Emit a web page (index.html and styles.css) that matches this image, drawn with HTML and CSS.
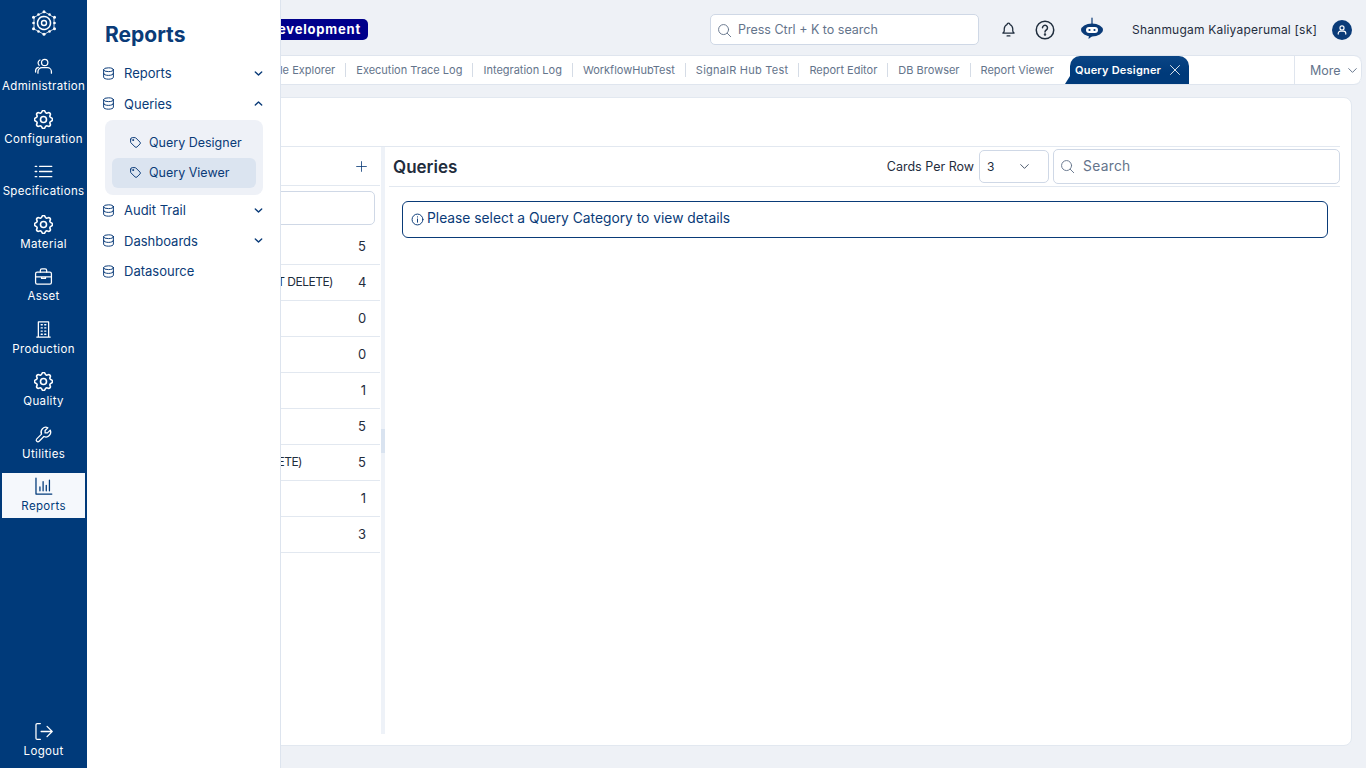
FILE: index.html
```html
<!DOCTYPE html>
<html lang="en">
<head>
  <meta charset="UTF-8">
  <meta name="viewport" content="width=device-width, initial-scale=1.0">
  <title>Query Designer</title>
  <link rel="stylesheet" href="styles.css">
</head>
<body>

  <!-- shared icons -->
  <svg class="icon-defs" aria-hidden="true">
    <symbol id="i-gear" viewBox="2.5 2.5 19 19">
      <path d="M10.325 4.317c.426-1.756 2.924-1.756 3.35 0a1.724 1.724 0 0 0 2.573 1.066c1.543-.94 3.31.826 2.37 2.37a1.724 1.724 0 0 0 1.065 2.572c1.756.426 1.756 2.924 0 3.35a1.724 1.724 0 0 0-1.066 2.573c.94 1.543-.826 3.31-2.37 2.37a1.724 1.724 0 0 0-2.572 1.065c-.426 1.756-2.924 1.756-3.35 0a1.724 1.724 0 0 0-2.573-1.066c-1.543.94-3.31-.826-2.37-2.37a1.724 1.724 0 0 0-1.065-2.572c-1.756-.426-1.756-2.924 0-3.35a1.724 1.724 0 0 0 1.066-2.573c-.94-1.543.826-3.31 2.37-2.37 1 .608 2.296.07 2.572-1.065z"/>
      <circle cx="12" cy="12" r="3"/>
    </symbol>
    <symbol id="i-db" viewBox="0 0 24 24">
      <ellipse cx="12" cy="5" rx="9" ry="3.500"/>
      <path d="M3 5v14c0 1.900 4 3.500 9 3.500s9-1.600 9-3.500V5"/>
      <path d="M3 12c0 1.900 4 3.500 9 3.500s9-1.600 9-3.500"/>
    </symbol>
    <symbol id="i-tag" viewBox="0 0 24 24">
      <circle cx="7.500" cy="7.500" r="1"/>
      <path d="M3 6v5.172a2 2 0 0 0 .586 1.414l7.71 7.71a2.41 2.41 0 0 0 3.408 0l5.592-5.592a2.41 2.41 0 0 0 0-3.408l-7.71-7.71a2 2 0 0 0-1.414-.586h-5.172a3 3 0 0 0-3 3z"/>
    </symbol>
    <symbol id="i-search" viewBox="0 0 24 24">
      <circle cx="10.500" cy="10.500" r="8"/>
      <path d="M16.500 16.500 22 22"/>
    </symbol>
    <symbol id="i-down" viewBox="0 0 24 24">
      <path d="M5 8.500l7 7 7-7"/>
    </symbol>
  </svg>

  <nav class="rail">
    <div class="rail-logo">
      <svg class="logo" viewBox="0 0 26 26">
        <path class="logo-links" d="M13 2 8 4.500 3 7.500v5.500l0 6 5 2.500 5 3 5-3 5-2.500v-6l0-5.500-5-3z"/>
        <g class="logo-dots">
          <circle cx="13" cy="1.800" r="1.500"/>
          <circle cx="18.500" cy="4.500" r="1.300"/>
          <circle cx="23.500" cy="7.200" r="1.500"/>
          <circle cx="23.500" cy="13" r="1.300"/>
          <circle cx="23.500" cy="18.800" r="1.500"/>
          <circle cx="18.500" cy="21.500" r="1.300"/>
          <circle cx="13" cy="24.200" r="1.500"/>
          <circle cx="7.500" cy="21.500" r="1.300"/>
          <circle cx="2.500" cy="18.800" r="1.500"/>
          <circle cx="2.500" cy="13" r="1.300"/>
          <circle cx="2.500" cy="7.200" r="1.500"/>
          <circle cx="7.500" cy="4.500" r="1.300"/>
        </g>
        <circle class="logo-ring" cx="13" cy="13" r="6.500"/>
        <circle class="logo-core" cx="13" cy="13" r="2.500"/>
      </svg>
    </div>
    <a class="rail-item">
      <svg class="rail-icon" viewBox="0 0 24 24"><circle cx="13.500" cy="7" r="4"/><path d="M5 20.500v-2a5 5 0 0 1 5-5h7a5 5 0 0 1 5 5v2"/><path d="M7.500 3.800a4 4 0 0 0-1 6.600"/><path d="M5.500 13A4.500 4.500 0 0 0 2 17.500v1.500"/></svg>
      <span>Administration</span>
    </a>
    <a class="rail-item">
      <svg class="rail-icon"><use href="#i-gear"/></svg>
      <span>Configuration</span>
    </a>
    <a class="rail-item">
      <svg class="rail-icon" viewBox="0 0 24 24"><path d="M7 5.500h15.500M7 12h15.500M7 18.500h15.500M1.500 5.500h2M1.500 12h2M1.500 18.500h2"/></svg>
      <span>Specifications</span>
    </a>
    <a class="rail-item">
      <svg class="rail-icon"><use href="#i-gear"/></svg>
      <span>Material</span>
    </a>
    <a class="rail-item">
      <svg class="rail-icon" viewBox="0 0 24 24"><rect x="2" y="6.500" width="20" height="15" rx="2"/><path d="M8 6.500V4.500a2 2 0 0 1 2-2h4a2 2 0 0 1 2 2v2M2 12.500h20M9.500 12.500v2h5v-2"/></svg>
      <span>Asset</span>
    </a>
    <a class="rail-item">
      <svg class="rail-icon" viewBox="0 0 24 24"><path d="M5.500 21.500v-19h13v19M3.500 21.500h17M9 6h1.500M13.500 6H15M9 10h1.500M13.500 10H15M9 14h1.500M13.500 14H15M9 18h1.500M13.500 18H15"/></svg>
      <span>Production</span>
    </a>
    <a class="rail-item">
      <svg class="rail-icon"><use href="#i-gear"/></svg>
      <span>Quality</span>
    </a>
    <a class="rail-item">
      <svg class="rail-icon" viewBox="0 0 24 24"><path d="M7 10h3v-3l-3.500-3.500a6 6 0 0 1 8 8l6 6a2 2 0 0 1-3 3l-6-6a6 6 0 0 1-8-8z" transform="matrix(-1 0 0 1 24 0)"/></svg>
      <span>Utilities</span>
    </a>
    <a class="rail-item active">
      <svg class="rail-icon" viewBox="0 0 24 24"><path d="M2.500 1.500v20h20M7.500 17.500v-5M11.500 17.500V6M15.500 17.500v-7M19.500 17.500V4"/></svg>
      <span>Reports</span>
    </a>
    <a class="rail-item logout">
      <svg class="rail-icon" viewBox="0 0 24 24"><path d="M8 2H4a1.500 1.500 0 0 0-1.500 1.500v17A1.500 1.500 0 0 0 4 22h4M9 12h14M16.500 5.500 23 12l-6.500 6.500"/></svg>
      <span>Logout</span>
    </a>
  </nav>

  <aside class="flyout">
    <h2 class="flyout-title">Reports</h2>
    <a class="menu-item">
      <svg class="menu-icon"><use href="#i-db"/></svg>
      <span>Reports</span>
      <svg class="menu-arrow"><use href="#i-down"/></svg>
    </a>
    <a class="menu-item">
      <svg class="menu-icon"><use href="#i-db"/></svg>
      <span>Queries</span>
      <svg class="menu-arrow open"><use href="#i-down"/></svg>
    </a>
    <div class="submenu">
      <a class="submenu-item">
        <svg class="menu-icon"><use href="#i-tag"/></svg>
        <span>Query Designer</span>
      </a>
      <a class="submenu-item active">
        <svg class="menu-icon"><use href="#i-tag"/></svg>
        <span>Query Viewer</span>
      </a>
    </div>
    <a class="menu-item">
      <svg class="menu-icon"><use href="#i-db"/></svg>
      <span>Audit Trail</span>
      <svg class="menu-arrow"><use href="#i-down"/></svg>
    </a>
    <a class="menu-item">
      <svg class="menu-icon"><use href="#i-db"/></svg>
      <span>Dashboards</span>
      <svg class="menu-arrow"><use href="#i-down"/></svg>
    </a>
    <a class="menu-item">
      <svg class="menu-icon"><use href="#i-db"/></svg>
      <span>Datasource</span>
    </a>
  </aside>

  <div class="main">
    <header class="topbar">
      <span class="env-badge">Development</span>
      <div class="global-search">
        <svg class="search-icon"><use href="#i-search"/></svg>
        <span>Press Ctrl + K to search</span>
      </div>
      <svg class="top-icon bell" viewBox="0 0 24 24"><path d="M10 5a2 2 0 1 1 4 0 7 7 0 0 1 4 6v3a4 4 0 0 0 2 3H4a4 4 0 0 0 2-3v-3a7 7 0 0 1 4-6"/><path d="M10 21h4"/></svg>
      <svg class="top-icon help" viewBox="0 0 24 24"><circle cx="12" cy="12" r="10.500"/><path d="M9 9.300a3 3 0 1 1 4.500 2.700c-1 .6-1.500 1.200-1.500 2.400"/><circle cx="12" cy="17.500" r=".6"/></svg>
      <svg class="bot" viewBox="0 0 22 24"><path class="bot-stem" d="M11 1v6"/><ellipse cx="11" cy="13" rx="11" ry="6.500"/><path d="M8 18l-.5 4 4.500-3.500z"/><rect class="bot-face" x="5" y="10" width="12" height="6" rx="3"/><circle cx="8.500" cy="13" r="1.100"/><circle cx="13.500" cy="13" r="1.100"/></svg>
      <span class="user-name">Shanmugam Kaliyaperumal [sk]</span>
      <span class="avatar">
        <svg viewBox="0 0 24 24"><circle cx="12" cy="8.500" r="3.500"/><path d="M5.500 19v-1a4 4 0 0 1 4-4h5a4 4 0 0 1 4 4v1"/></svg>
      </span>
    </header>

    <div class="tabstrip">
      <div class="tabs">
        <a class="tab">Module Explorer</a>
        <a class="tab">Execution Trace Log</a>
        <a class="tab">Integration Log</a>
        <a class="tab">WorkflowHubTest</a>
        <a class="tab wide">SignalR Hub Test</a>
        <a class="tab">Report Editor</a>
        <a class="tab">DB Browser</a>
        <a class="tab last">Report Viewer</a>
        <a class="tab-active">
          <span>Query Designer</span>
          <svg viewBox="0 0 24 24"><path d="M3 3l18 18M21 3 3 21"/></svg>
        </a>
      </div>
      <div class="tab-more">
        <span>More</span>
        <svg><use href="#i-down"/></svg>
      </div>
    </div>

    <section class="card">
      <div class="card-head"></div>
      <div class="card-body">
        <div class="cat-panel">
          <div class="cat-head">
            <svg class="cat-add" viewBox="0 0 24 24"><path d="M12 3v18M3 12h18"/></svg>
          </div>
          <div class="cat-search"></div>
          <div class="cat-row"><span class="cat-name"></span><span class="cat-num">5</span></div>
          <div class="cat-row name-end-a"><span class="cat-name">T DELETE)</span><span class="cat-num">4</span></div>
          <div class="cat-row"><span class="cat-name"></span><span class="cat-num">0</span></div>
          <div class="cat-row"><span class="cat-name"></span><span class="cat-num">0</span></div>
          <div class="cat-row"><span class="cat-name"></span><span class="cat-num">1</span></div>
          <div class="cat-row"><span class="cat-name"></span><span class="cat-num">5</span></div>
          <div class="cat-row name-end-b"><span class="cat-name">ETE)</span><span class="cat-num">5</span></div>
          <div class="cat-row"><span class="cat-name"></span><span class="cat-num">1</span></div>
          <div class="cat-row"><span class="cat-name"></span><span class="cat-num">3</span></div>
        </div>

        <div class="splitter"><span class="splitter-handle"></span></div>

        <div class="query-panel">
          <div class="query-head">
            <h3 class="query-title">Queries</h3>
            <label class="cards-label">Cards Per Row</label>
            <div class="cards-select">
              <span>3</span>
              <svg><use href="#i-down"/></svg>
            </div>
            <div class="query-search">
              <svg class="search-icon"><use href="#i-search"/></svg>
              <span>Search</span>
            </div>
          </div>
          <div class="alert">
            <svg class="alert-icon" viewBox="0 0 24 24"><circle cx="12" cy="12" r="10"/><path d="M12 11v6"/><path d="M12 7v.5"/></svg>
            <span>Please select a Query Category to view details</span>
          </div>
        </div>
      </div>
    </section>
  </div>

</body>
</html>
```

FILE: styles.css
```css
* {
  box-sizing: border-box;
}

html, body {
  height: 100%;
}

body {
  margin: 0;
  overflow: hidden;
  display: flex;
  background: #eef1f6;
  color: #1f2d3d;
  font-family: Inter, "Noto Sans", sans-serif;
}

svg {
  fill: none;
  stroke: currentColor;
  stroke-linecap: round;
  stroke-linejoin: round;
}

.icon-defs {
  display: none;
}

/* left rail */
.rail {
  flex: 0 0 87px;
  height: 768px;
  padding: 0 2px 5px;
  display: flex;
  flex-direction: column;
  background: #003a7a;
  color: #fff;
}

.rail-logo {
  height: 53px;
  padding-top: 10px;
  display: flex;
  justify-content: center;
}

.logo {
  width: 26px;
  height: 26px;
}

.logo-links {
  stroke-width: 0.8;
}

.logo-dots {
  fill: #fff;
  stroke: none;
}

.logo-ring {
  stroke-width: 1.6;
  stroke-dasharray: 3 1.1;
}

.logo-core {
  stroke-width: 1.4;
}

.rail-item {
  height: 45px;
  margin-bottom: 7.5px;
  padding-bottom: 1px;
  display: flex;
  flex-direction: column;
  align-items: center;
  justify-content: center;
  gap: 3px;
  font-size: 11.5px;
  letter-spacing: 0.35px;
  white-space: nowrap;
}

.rail-item.active {
  background: #f5f8fc;
  color: #003a7a;
}

.rail-item.logout {
  margin-top: auto;
  margin-bottom: 0;
}

.rail-icon {
  width: 19px;
  height: 19px;
  stroke-width: 1.6;
}

/* flyout menu, open over the page */
.flyout {
  position: absolute;
  top: 0;
  left: 87px;
  z-index: 5;
  width: 194px;
  height: 768px;
  padding: 0 17px 0 18px;
  background: #fff;
  border-right: 1px solid #dde4ee;
  color: #0a3b78;
}

.flyout-title {
  margin: 0;
  padding-top: 21px;
  height: 58px;
  font-size: 21px;
  line-height: 28px;
  font-weight: 700;
}

.menu-item {
  height: 30.5px;
  margin-left: -3px;
  display: flex;
  align-items: center;
  font-size: 13px;
}

.menu-icon {
  flex: none;
  width: 13px;
  height: 13px;
  margin-right: 9px;
  stroke-width: 1.8;
}

.menu-arrow {
  margin-left: auto;
  margin-right: -1px;
  width: 11px;
  height: 11px;
  stroke-width: 3;
}

.menu-arrow.open {
  transform: rotate(180deg);
}

.submenu {
  height: 75px;
  margin: 0.5px 0;
  padding: 8px 7px 7px;
  display: flex;
  flex-direction: column;
  background: #eef1f7;
  border-radius: 8px;
}

.submenu-item {
  height: 30px;
  padding-left: 17px;
  display: flex;
  align-items: center;
  border-radius: 6px;
  font-size: 12.5px;
}

.submenu-item .menu-icon {
  margin-right: 7px;
}

.submenu-item.active {
  background: #dbe4f0;
}

/* page */
.main {
  flex: 1;
  min-width: 0;
  display: flex;
  flex-direction: column;
}

.topbar {
  height: 55px;
  flex: none;
  padding: 4px 14px 0 0;
  display: flex;
  align-items: center;
  justify-content: flex-end;
}

.env-badge {
  margin-right: 342px;
  padding: 0 7px;
  height: 21px;
  line-height: 21px;
  border-radius: 5px;
  background: #00008b;
  color: #fff;
  font-size: 13px;
  font-weight: 700;
  letter-spacing: 0.8px;
}

.global-search {
  width: 269px;
  height: 31px;
  padding-left: 6px;
  display: flex;
  align-items: center;
  gap: 6px;
  background: #fff;
  border: 1px solid #cfd8e6;
  border-radius: 5px;
  color: #64748b;
  font-size: 12.5px;
}

.search-icon {
  flex: none;
  width: 15px;
  height: 15px;
  margin-top: 2px;
  stroke-width: 1.5;
  color: #64748b;
}

.top-icon {
  flex: none;
  color: #1f2d3d;
}

.bell {
  width: 17px;
  height: 17px;
  margin-left: 21px;
  stroke-width: 1.8;
}

.help {
  width: 20px;
  height: 20px;
  margin-left: 18px;
  stroke-width: 1.8;
}

.bot {
  flex: none;
  width: 22px;
  height: 24px;
  margin-left: 26px;
  margin-top: -1px;
  fill: #0a3b78;
  stroke: none;
  color: #0a3b78;
}

.bot-stem {
  stroke: #0a3b78;
  stroke-width: 1.2;
}

.bot-face {
  fill: #fff;
}

.user-name {
  margin-left: 29px;
  font-size: 12px;
  letter-spacing: 0.2px;
  white-space: nowrap;
}

.avatar {
  flex: none;
  width: 20px;
  height: 20px;
  margin-left: 15px;
  padding: 3px;
  border-radius: 50%;
  background: #0a3b78;
  color: #fff;
}

.avatar svg {
  display: block;
  stroke-width: 2;
}

.tabstrip {
  flex: none;
  height: 30px;
  margin-right: 4px;
  display: flex;
  background: #fff;
  border: 1px solid #dfe5ee;
  border-width: 1px 0;
  border-radius: 0 8px 8px 0;
}

.tabs {
  flex: 1;
  min-width: 0;
  padding: 0 105px 0 5px;
  display: flex;
  justify-content: flex-end;
  align-items: center;
  overflow: hidden;
}

.tab {
  flex: none;
  height: 14px;
  padding: 0 10px;
  border-right: 1px solid #d5dce6;
  color: #64748b;
  font-size: 11px;
  line-height: 14px;
  white-space: nowrap;
}

.tab.wide {
  letter-spacing: 0.25px;
}

.tab.last {
  border-right: 0;
  padding-right: 16px;
}

.tab-active {
  position: relative;
  flex: none;
  width: 119px;
  height: 28px;
  padding: 0 8px 0 5px;
  display: flex;
  align-items: center;
  justify-content: space-between;
  background: linear-gradient(#0a4585, #003a7a 60%);
  color: #fff;
  border-radius: 10px 10px 0 0;
  font-size: 11px;
  font-weight: 600;
  letter-spacing: 0.2px;
  white-space: nowrap;
}

.tab-active::before {
  content: "";
  position: absolute;
  left: -5px;
  bottom: 0;
  border-style: solid;
  border-width: 0 0 8px 5px;
  border-color: transparent transparent #003a7a transparent;
}

.tab-active svg {
  width: 12px;
  height: 12px;
  stroke-width: 1.7;
}

.tab-more {
  flex: none;
  width: 68px;
  padding-left: 15px;
  display: flex;
  align-items: center;
  gap: 5px;
  border: 1px solid #dfe5ee;
  border-width: 0 1px 0 1px;
  border-radius: 0 8px 8px 0;
  color: #64748b;
  font-size: 12.5px;
}

.tab-more svg {
  width: 13px;
  height: 13px;
  stroke-width: 1.8;
}

.card {
  flex: none;
  height: 649px;
  margin: 12px 14px 0 10px;
  padding: 0 11px 11px 0;
  display: flex;
  flex-direction: column;
  background: #fff;
  border: 1px solid #e2e8f0;
  border-radius: 8px;
}

.card-head {
  flex: none;
  height: 49px;
  border-bottom: 1px solid #e2e8f0;
}

.card-body {
  flex: 1;
  min-height: 0;
  display: flex;
}

.cat-panel {
  flex: 1;
  min-width: 0;
}

.cat-head {
  height: 39px;
  padding-right: 12px;
  display: flex;
  align-items: center;
  justify-content: flex-end;
  border-bottom: 1px solid #e2e8f0;
}

.cat-add {
  width: 13px;
  height: 13px;
  stroke-width: 1.5;
  color: #0a3b78;
}

.cat-search {
  height: 34px;
  margin: 5px 5px 4px 10px;
  border: 1px solid #cfd8e6;
  border-radius: 5px;
}

.cat-row {
  height: 36px;
  padding: 0 14px 2px 10px;
  display: flex;
  align-items: center;
  border-bottom: 1px solid #e2e8f0;
  font-size: 13px;
  white-space: nowrap;
}

.cat-name {
  flex: 1;
  min-width: 0;
  font-size: 12px;
  letter-spacing: -0.5px;
  text-align: right;
}

.name-end-a .cat-name {
  padding-right: 25px;
}

.name-end-b .cat-name {
  padding-right: 56px;
}

.cat-num {
  width: 8px;
  text-align: right;
}

.splitter {
  flex: none;
  width: 4px;
  margin-left: 1px;
  display: flex;
  align-items: center;
  background: #eef2f8;
}

.splitter-handle {
  width: 4px;
  height: 24px;
  background: #d9e3f0;
}

.query-panel {
  flex: none;
  width: 955px;
  padding-left: 4px;
}

.query-head {
  height: 40px;
  padding-left: 4px;
  display: flex;
  align-items: center;
  border-bottom: 1px solid #e2e8f0;
}

.query-title {
  flex: 1;
  margin: 0;
  font-size: 17px;
  font-weight: 600;
}

.cards-label {
  margin-right: 5px;
  font-size: 12.5px;
  white-space: nowrap;
}

.cards-select {
  width: 70px;
  height: 33px;
  margin-right: 4px;
  padding: 0 17px 0 7px;
  display: flex;
  align-items: center;
  justify-content: space-between;
  border: 1px solid #cfd8e6;
  border-radius: 5px;
  font-size: 12px;
}

.cards-select svg {
  width: 13px;
  height: 13px;
  stroke-width: 1.8;
  color: #475569;
}

.query-search {
  width: 287px;
  height: 35px;
  padding: 0 0 2px 6px;
  display: flex;
  align-items: center;
  gap: 8px;
  border: 1px solid #cfd8e6;
  border-radius: 5px;
  color: #64748b;
  font-size: 13.8px;
  letter-spacing: 0.3px;
}

.alert {
  height: 37px;
  margin: 14px 12px 0 13px;
  padding: 0 0 3px 8px;
  display: flex;
  align-items: center;
  gap: 3px;
  border: 1px solid #0a3b78;
  border-radius: 6px;
  color: #0a3b78;
  font-size: 13.8px;
}

.alert-icon {
  flex: none;
  width: 13px;
  height: 13px;
  margin-top: 2px;
  stroke-width: 1.8;
}
```
